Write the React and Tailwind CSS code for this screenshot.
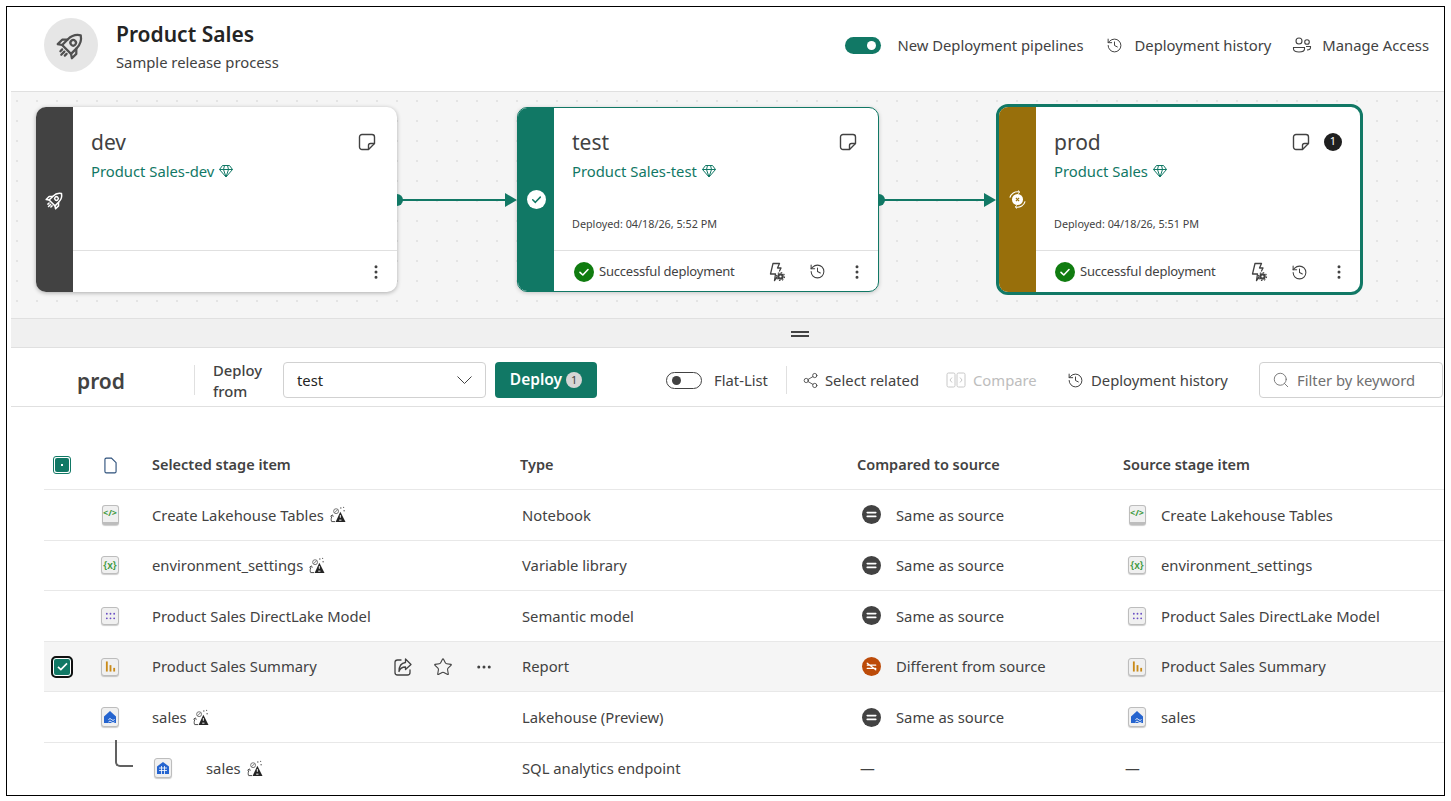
import { Ellipsis, EllipsisVertical, History, Search, Share2, Star } from 'lucide-react'

const RocketIcon = ({ className }) => (
  <svg viewBox="0 0 24 24" fill="none" stroke="currentColor" strokeWidth="1.800" strokeLinejoin="round" strokeLinecap="round" className={className}>
    <g transform="rotate(45 12 12)">
      <path d="M12 1C15.800 3.500 17 7 17 10.500V17H7v-6.500C7 7 8.200 3.500 12 1Z" />
      <circle cx="12" cy="9.500" r="2.200" />
      <path d="M7 11 4 14v5l3-2M17 11l3 3v5l-3-2" />
      <path d="M9.500 19.500v2M12 19.500v3.500M14.500 19.500v2" />
    </g>
  </svg>
)

const NoteIcon = () => (
  <svg viewBox="0 0 18 18" fill="none" stroke="#424242" strokeWidth="1.400" strokeLinejoin="round" className="w-[18px] h-[18px]">
    <path d="M4 1.500h10A2.500 2.500 0 0 1 16.500 4v6.500l-6 6H4A2.500 2.500 0 0 1 1.500 14V4A2.500 2.500 0 0 1 4 1.500Z" />
    <path d="M16.500 10.500h-4a2 2 0 0 0-2 2v4" />
  </svg>
)

const GemIcon = () => (
  <svg viewBox="0 0 16 16" fill="none" stroke="#117865" strokeWidth="1" strokeLinejoin="round" className="w-[16px] h-[16px] ml-[4px]">
    <path d="M4.500 2.500h7l3 4L8 14 1.500 6.500Z" />
    <path d="M1.500 6.500h13M5.500 6.500 8 14l2.500-7.500M5.500 6.500 6.500 2.500M10.500 6.500l-1-4" />
  </svg>
)

const RulesIcon = () => (
  <svg viewBox="0 0 20 20" fill="none" className="w-[20px] h-[20px]">
    <path d="M7 1.500h6.500L11.500 6H15l-1.500 3M8.500 18.500 9.500 12H4.500L7 1.500M8.500 18.500 11 15" stroke="#424242" strokeWidth="1.300" strokeLinejoin="round" strokeLinecap="round" />
    <circle cx="14.500" cy="14.500" r="3.200" fill="#424242" />
    <circle cx="14.500" cy="14.500" r="4" stroke="#424242" strokeWidth="1.200" strokeDasharray="1.500 1.600" />
    <circle cx="14.500" cy="14.500" r="1.100" fill="#fff" />
  </svg>
)

const CheckCircle = ({ className, check }) => (
  <svg viewBox="0 0 20 20" className={className}>
    <circle cx="10" cy="10" r="10" fill="currentColor" />
    <path d="M6 10.300 8.800 13 14 7.500" fill="none" stroke={check} strokeWidth="1.600" strokeLinecap="round" strokeLinejoin="round" />
  </svg>
)

const SyncX = () => (
  <svg viewBox="0 0 20 20" fill="none" stroke="#fff" className="w-[19px] h-[19px]">
    <path d="M2 8A8.200 8.200 0 0 1 11.500 2M18 12A8.200 8.200 0 0 1 8.500 18" strokeWidth="1.200" />
    <path d="M10.500 .5 12.500 2.200 10.500 3.800M9.500 16.200 7.500 17.800 9.500 19.500" strokeWidth="1" />
    <circle cx="10" cy="10" r="5.800" fill="#fff" stroke="none" />
    <path d="M8.300 8.300l3.400 3.400M11.700 8.300l-3.400 3.400" stroke="#986f0b" strokeWidth="1.200" />
  </svg>
)

const Connector = ({ className }) => (
  <div className={`relative h-[20px] shrink-0 ${className}`}>
    <div className="absolute left-0 top-[4px] w-[6px] h-[12px] rounded-r-full bg-[#117865]" />
    <div className="absolute left-0 right-[10px] top-[9px] h-[2px] bg-[#117865]" />
    <svg viewBox="0 0 12 14" className="absolute right-0 top-[3px] w-[12px] h-[14px]">
      <path d="M0 0 12 7 0 14Z" fill="#117865" />
    </svg>
  </div>
)

const DeployStatus = ({ className }) => (
  <>
    <div className={`flex items-center ${className}`}>
      <CheckCircle className="w-[20px] h-[20px] text-[#107c10]" check="#fff" />
      <span className="ml-[5px] text-[13px] text-[#424242] tracking-[-0.2px]">Successful deployment</span>
    </div>
    <div className="ml-auto flex items-center">
      <RulesIcon />
      <History className="w-[17px] h-[17px] ml-[23px] text-[#424242]" strokeWidth={1.500} />
    </div>
  </>
)

const StageCard = ({ name, workspace, deployed, frame, band, body, footer, icon, children, badge }) => (
  <div className={`flex shrink-0 bg-white overflow-hidden ${frame}`}>
    <div className={`flex items-center justify-center shrink-0 ${band}`}>{icon}</div>
    <div className="flex flex-col flex-1 min-w-0">
      <div className={`relative flex-1 pl-[18px] ${body}`}>
        <div className="flex items-center justify-between pr-[21px] pt-[14px] h-[53px] mb-[2px]">
          <span className="text-[21px] leading-[38px] text-[#424242]">{name}</span>
          <div className={`flex items-center ${badge ? 'mr-[-3px]' : ''}`}>
            <NoteIcon />
            {badge && (
              <span className="ml-[14px] w-[18px] h-[18px] rounded-full bg-[#1f1f1f] text-white text-[11px] flex items-center justify-center">1</span>
            )}
          </div>
        </div>
        <div className="flex items-center h-[24px] mt-[-4px] text-[14.800px] text-[#117865]">
          {workspace}
          <GemIcon />
        </div>
        {deployed && (
          <div className="absolute left-[18px] top-[109px] text-[10.800px] leading-[14px] text-[#424242]">Deployed: {deployed}</div>
        )}
      </div>
      <div className={`flex items-center shrink-0 border-t border-[#e0e0e0] pr-[12px] pt-[1px] ${footer}`}>
        {children}
        <EllipsisVertical className={`w-[18px] h-[18px] text-[#424242] ${children ? 'ml-[22px]' : 'ml-auto'}`} strokeWidth={2} />
      </div>
    </div>
  </div>
)

const Tile = ({ children, className }) => (
  <div className={`flex items-center justify-center rounded-[3px] border border-[#bdbdbd] bg-[#f0f0f0] shadow-[0_1px_1px_rgba(0,0,0,0.2)] ${className}`}>
    {children}
  </div>
)

const NotebookTile = () => (
  <Tile className="w-[17px] h-[20px] items-start border-b-[3px]">
    <span className="text-[9px] leading-[13px] font-bold text-[#3f9a3f]">&lt;/&gt;</span>
  </Tile>
)
const VariableTile = () => (
  <Tile className="w-[18px] h-[18px]">
    <span className="text-[10px] leading-none font-semibold text-[#3f9a3f]">{'{x}'}</span>
  </Tile>
)
const ModelTile = () => (
  <Tile className="w-[18px] h-[18px]">
    <svg viewBox="0 0 12 8" className="w-[11px] h-[8px]" fill="#6b4fc4">
      <circle cx="2" cy="1.500" r="1" /><circle cx="6" cy="1.500" r="1" /><circle cx="10" cy="1.500" r="1" />
      <circle cx="2" cy="6.500" r="1" /><circle cx="6" cy="6.500" r="1" /><circle cx="10" cy="6.500" r="1" />
    </svg>
  </Tile>
)
const ReportTile = () => (
  <Tile className="w-[18px] h-[18px]">
    <svg viewBox="0 0 12 11" className="w-[11px] h-[11px]" fill="#c98a18">
      <rect x="1" y="0" width="2" height="11" /><rect x="5" y="4" width="2" height="7" /><rect x="9" y="7" width="2" height="4" />
    </svg>
  </Tile>
)
const LakehouseTile = () => (
  <Tile className="w-[18px] h-[20px]">
    <svg viewBox="0 0 14 14" className="w-[14px] h-[14px]">
      <path d="M1 6.500 7 1l6 5.500V13H1Z" fill="#2564cf" />
      <path d="M5.500 9.500c1-1 2-1 3 0s2 1 3 0M5.500 12c1-1 2-1 3 0s2 1 3 0" fill="none" stroke="#fff" strokeWidth="1" />
    </svg>
  </Tile>
)
const SqlTile = () => (
  <Tile className="w-[18px] h-[20px]">
    <svg viewBox="0 0 14 14" className="w-[14px] h-[14px]">
      <path d="M1 5.500 7 1l6 4.500V13H1Z" fill="#2564cf" />
      <path d="M3 7h8M3 9.500h8M5.500 5v8M8.500 5v8" stroke="#fff" strokeWidth=".8" />
    </svg>
  </Tile>
)

const EndorseIcon = () => (
  <svg viewBox="0 0 18 18" className="w-[17px] h-[17px] ml-[5px] shrink-0">
    <path d="M12 6 17.500 17H7Z" fill="#242424" />
    <path d="M12 9.500v3M10.800 15h2.400" stroke="#fff" strokeWidth="1" />
    <path d="M2.500 16c-.5-2 0-4 1-6M1.500 11l2-1.500L5 11M2.500 16.500h4" fill="none" stroke="#424242" strokeWidth="1" />
    <circle cx="7.500" cy="5.500" r="2.600" fill="none" stroke="#616161" strokeWidth=".9" />
    <path d="M5.800 7.200 9.200 3.800" stroke="#616161" strokeWidth=".9" />
    <circle cx="12.500" cy="2" r=".8" fill="#616161" /><circle cx="16" cy="5" r=".8" fill="#616161" /><circle cx="15.500" cy="1.500" r=".6" fill="#616161" />
  </svg>
)

const SameIcon = () => (
  <svg viewBox="0 0 20 20" className="w-[19px] h-[19px] shrink-0">
    <circle cx="10" cy="10" r="10" fill="#424242" />
    <path d="M5.500 8h9M5.500 12h9" stroke="#fff" strokeWidth="1.700" strokeLinecap="round" />
  </svg>
)

const DiffIcon = () => (
  <svg viewBox="0 0 20 20" className="w-[19px] h-[19px] shrink-0">
    <circle cx="10" cy="10" r="10" fill="#bc4b09" />
    <path d="M5.500 8.500h9M5.500 12h9M5.500 6.500 14.500 13.500" stroke="#fff" strokeWidth="1.300" strokeLinecap="round" />
  </svg>
)

const rows = [
  { name: 'Create Lakehouse Tables', endorse: true, type: 'Notebook', same: true, tile: <NotebookTile /> },
  { name: 'environment_settings', endorse: true, type: 'Variable library', same: true, tile: <VariableTile /> },
  { name: 'Product Sales DirectLake Model', type: 'Semantic model', same: true, tile: <ModelTile /> },
  { name: 'Product Sales Summary', type: 'Report', same: false, tile: <ReportTile />, selected: true },
  { name: 'sales', endorse: true, type: 'Lakehouse (Preview)', same: true, tile: <LakehouseTile /> },
]

const gridCols = 'grid grid-cols-[44px_44px_388px_337px_266px_1fr] items-center'

const TableRow = ({ row }) => (
  <div className={`${gridCols} h-[50.600px] border-b border-[#e8e8e8] text-[14.800px] text-[#424242] ${row.selected ? 'bg-[#f5f5f5]' : ''}`}>
    <div className="pl-[7px]">
      {row.selected && (
        <div className="w-[22px] h-[22px] rounded-[5px] bg-[#117865] border-[2px] border-[#111] outline outline-1 outline-offset-[-3px] outline-white flex items-center justify-center">
          <svg viewBox="0 0 12 10" className="w-[11px] h-[9px]"><path d="M1 5.500 4.200 8.500 11 1.500" fill="none" stroke="#fff" strokeWidth="1.800" /></svg>
        </div>
      )}
    </div>
    <div className="flex justify-center">{row.tile}</div>
    <div className="flex items-center pl-[20px]">
      <span>{row.name}</span>
      {row.endorse && <EndorseIcon />}
      {row.selected && (
        <div className="ml-auto flex items-center pr-[27px] text-[#424242]">
          <svg viewBox="0 0 20 20" fill="none" stroke="currentColor" strokeWidth="1.300" strokeLinejoin="round" strokeLinecap="round" className="w-[20px] h-[20px]">
            <path d="M8 3H4.500A2.500 2.500 0 0 0 2 5.500v10A2.500 2.500 0 0 0 4.500 18h10a2.500 2.500 0 0 0 2.500-2.500V13" />
            <path d="M12.500 2 18 7.500 12.500 12.500V10C9 10 7 11.500 6 14.500 6 9.500 8.500 6 12.500 5.500Z" />
          </svg>
          <Star className="w-[20px] h-[20px] ml-[20px]" strokeWidth={1.300} />
          <Ellipsis className="w-[18px] h-[18px] ml-[22px]" strokeWidth={2} />
        </div>
      )}
    </div>
    <div className="pl-[2px]">{row.type}</div>
    <div className="flex items-center pl-[5px]">
      {row.same ? <SameIcon /> : <DiffIcon />}
      <span className="ml-[15px]">{row.same ? 'Same as source' : 'Different from source'}</span>
    </div>
    <div className="flex items-center pl-[5px]">
      <div className="w-[18px] flex justify-center">{row.tile}</div>
      <span className="ml-[15px]">{row.name}</span>
    </div>
  </div>
)

const App = () => {
  return (
    <div className="w-[1451px] h-[801px] bg-white p-[6px] font-['Noto_Sans',sans-serif]">
      <div className="w-[1439px] h-[790px] border border-black overflow-hidden pl-[4px] flex flex-col">
        {/* Header */}
        <div className="flex items-center h-[85px] shrink-0 border-b border-[#e0e0e0] pl-[33px] pr-[15px] pb-[8px]">
          <div className="w-[54px] h-[54px] rounded-full bg-[#e6e6e6] flex items-center justify-center text-[#505050]">
            <RocketIcon className="w-[30px] h-[30px]" />
          </div>
          <div className="ml-[18px] mt-[1px]">
            <div className="text-[21px] leading-[30px] font-semibold text-[#242424]">Product Sales</div>
            <div className="text-[14.800px] leading-[22px] mt-[2px] text-[#424242]">Sample release process</div>
          </div>
          <div className="ml-auto flex items-center text-[14.800px] text-[#424242]">
            <div className="w-[36px] h-[17px] rounded-full bg-[#117865] flex items-center justify-end pr-[5px]">
              <div className="w-[9px] h-[9px] rounded-full bg-white" />
            </div>
            <span className="ml-[16px]">New Deployment pipelines</span>
            <History className="w-[17px] h-[17px] ml-[22px]" strokeWidth={1.400} />
            <span className="ml-[12px]">Deployment history</span>
            <svg viewBox="0 0 20 20" fill="none" stroke="currentColor" strokeWidth="1.100" className="w-[20px] h-[20px] ml-[21px]">
              <circle cx="7" cy="6" r="3" />
              <circle cx="15" cy="7" r="2.300" />
              <path d="M1.500 12.500h11v1.500c0 2-2.500 3-5.500 3s-5.500-1-5.500-3Z" />
              <path d="M14 11.500h4.500v1c0 1.500-1.500 2.500-3.500 2.500" />
            </svg>
            <span className="ml-[10px]">Manage Access</span>
          </div>
        </div>

        {/* Pipeline canvas */}
        <div className="h-[226px] shrink-0 bg-[#f5f5f5] bg-[radial-gradient(#e4e4e4_0.8px,transparent_1px)] bg-[size:20px_20px] bg-[position:-4px_-1px] pt-[12px] pl-[25px]">
          <div className="flex items-center h-[191px]">
            <StageCard
              name="dev"
              workspace="Product Sales-dev"
              frame="w-[361px] h-[185px] rounded-[10px] shadow-[0_1px_4px_rgba(0,0,0,0.3)]"
              band="w-[37px] bg-[#424242]"
              body="mt-[1px]"
              footer="h-[42px]"
              icon={<RocketIcon className="w-[20px] h-[20px] text-white" />}
            />
            <Connector className="w-[120px]" />
            <StageCard
              name="test"
              workspace="Product Sales-test"
              deployed="04/18/26, 5:52 PM"
              frame="w-[362px] h-[185px] rounded-[10px] border border-[#117865] shadow-[0_1px_4px_rgba(0,0,0,0.2)]"
              band="w-[36px] bg-[#117865]"
              footer="h-[41px]"
              icon={<CheckCircle className="w-[19px] h-[19px] text-white" check="#117865" />}
            >
              <DeployStatus className="ml-[20px]" />
            </StageCard>
            <Connector className="w-[117px]" />
            <StageCard
              name="prod"
              workspace="Product Sales"
              deployed="04/18/26, 5:51 PM"
              badge
              frame="w-[367px] h-[191px] rounded-[12px] border-[3px] border-[#117865]"
              band="w-[37px] bg-[#986f0b]"
              body="mt-[1px]"
              footer="h-[42px]"
              icon={<SyncX />}
            >
              <DeployStatus className="ml-[19px]" />
            </StageCard>
          </div>
        </div>

        {/* Splitter */}
        <div className="h-[30px] shrink-0 bg-[#f0f0f0] border-y border-[#e0e0e0] flex flex-col items-center justify-center gap-[2px] pl-[144px] pt-[1px]">
          <div className="w-[18px] h-[2px] bg-[#424242]" />
          <div className="w-[18px] h-[2px] bg-[#424242]" />
        </div>

        {/* Toolbar */}
        <div className="flex items-center h-[59px] shrink-0 border-b border-[#e0e0e0] pl-[66px] pt-[6px] text-[14.800px] text-[#424242]">
          <span className="w-[117px] mt-[4px] text-[21px] font-semibold">prod</span>
          <div className="w-px h-[30px] bg-[#e0e0e0]" />
          <div className="ml-[18px] mt-[2px] w-[70px] font-medium leading-[21px]">Deploy from</div>
          <div className="w-[203px] h-[36px] rounded-[4px] border border-[#d1d1d1] flex items-center justify-between pl-[13px] pr-[13px]">
            <span className="text-[#242424]">test</span>
            <svg viewBox="0 0 15 8" fill="none" stroke="currentColor" strokeWidth="1" className="w-[15px] h-[8px]">
              <path d="M.5.500 7.500 7.500 14.500.500" />
            </svg>
          </div>
          <div className="ml-[9px] w-[102px] h-[36px] rounded-[4px] bg-[#117865] flex items-center justify-center text-white text-[15.500px] font-semibold">
            Deploy
            <span className="ml-[4px] w-[16px] h-[16px] rounded-full bg-[#d6d6d6] text-[#424242] text-[11px] font-normal flex items-center justify-center">1</span>
          </div>
          <div className="ml-[69px] w-[36px] h-[17px] rounded-full border border-[#424242] flex items-center pl-[5px]">
            <div className="w-[9px] h-[9px] rounded-full bg-[#424242]" />
          </div>
          <span className="ml-[12px] w-[72px]">Flat-List</span>
          <div className="w-px h-[28px] bg-[#e0e0e0]" />
          <Share2 className="w-[17px] h-[17px] ml-[15px]" strokeWidth={1.200} />
          <span className="ml-[6px] w-[112px]">Select related</span>
          <svg viewBox="0 0 20 16" fill="none" stroke="#c8c8c8" strokeWidth="1" className="w-[20px] h-[16px] ml-[9px]">
            <rect x="1" y="1" width="8" height="14" rx="1.500" />
            <rect x="11" y="1" width="8" height="14" rx="1.500" />
            <path d="M6 5.500 4 8l2 2.500M14 5.500 16 8l-2 2.500" />
          </svg>
          <span className="ml-[7px] w-[88px] text-[#bdbdbd]">Compare</span>
          <History className="w-[17px] h-[17px] ml-[6px]" strokeWidth={1.400} />
          <span className="ml-[7px] w-[168px]">Deployment history</span>
          <div className="w-[184px] h-[36px] rounded-[4px] border border-[#d1d1d1] flex items-center pl-[12px] text-[#707070]">
            <Search className="w-[18px] h-[18px]" strokeWidth={1.200} />
            <span className="ml-[7px]">Filter by keyword</span>
          </div>
        </div>

        {/* Items table */}
        <div className="ml-[33px] pt-[34px] relative">
          <div className={`${gridCols} h-[49px] border-b border-[#e8e8e8] text-[14.500px] font-semibold text-[#424242]`}>
            <div className="pl-[9px]">
              <div className="w-[18px] h-[18px] rounded-[3px] border border-[#117865] p-[1px]">
                <div className="w-full h-full rounded-[2px] bg-[#117865] flex items-center justify-center">
                  <div className="w-[2px] h-[2px] bg-white" />
                </div>
              </div>
            </div>
            <div className="flex justify-center">
              <svg viewBox="0 0 14 18" fill="none" stroke="#2b4f7a" strokeWidth="1.200" className="w-[13px] h-[17px]">
                <path d="M2.500 1h5.500l5 5v9.500a1.500 1.500 0 0 1-1.500 1.500h-9A1.500 1.500 0 0 1 1 15.500V2.500A1.500 1.500 0 0 1 2.500 1Z" />
              </svg>
            </div>
            <div className="pl-[20px]">Selected stage item</div>
            <div>Type</div>
            <div>Compared to source</div>
            <div>Source stage item</div>
          </div>
          {rows.map((row) => <TableRow key={row.type} row={row} />)}
          <div className={`${gridCols} h-[51px] text-[14.800px] text-[#424242]`}>
            <div />
            <div className="relative h-full">
              <div className="absolute left-[27px] top-[-3px] w-[18px] h-[27px] border-l-2 border-b-2 border-[#616161] rounded-bl-[5px]" />
            </div>
            <div className="flex items-center pl-[22px]">
              <SqlTile />
              <span className="ml-[34px]">sales</span>
              <EndorseIcon />
            </div>
            <div className="pl-[2px]">SQL analytics endpoint</div>
            <div className="pl-[3px]">—</div>
            <div className="pl-[2px]">—</div>
          </div>
        </div>
      </div>
    </div>
  )
}

export default App
